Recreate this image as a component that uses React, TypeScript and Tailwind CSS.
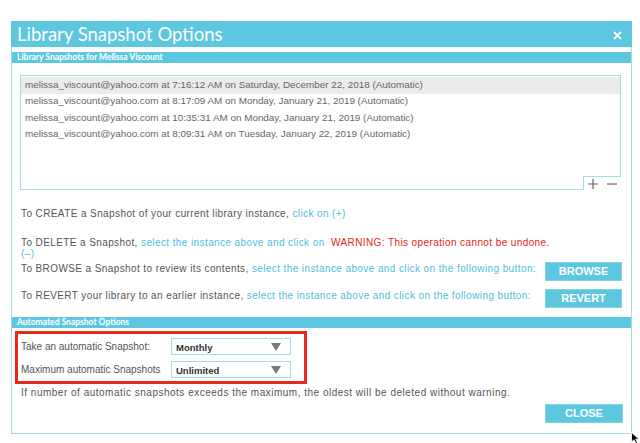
import React from "react";

const rows = [
  "melissa_viscount@yahoo.com at 7:16:12 AM on Saturday, December 22, 2018 (Automatic)",
  "melissa_viscount@yahoo.com at 8:17:09 AM on Monday, January 21, 2019 (Automatic)",
  "melissa_viscount@yahoo.com at 10:35:31 AM on Monday, January 21, 2019 (Automatic)",
  "melissa_viscount@yahoo.com at 8:09:31 AM on Tuesday, January 22, 2019 (Automatic)",
];

function Caret() {
  return (
    <svg width="10" height="8" viewBox="0 0 10 8" className="shrink-0">
      <path d="M0 0 H10 L5 8 Z" fill="#7a7a7a" />
    </svg>
  );
}

function Select({ value }: { value: string }) {
  return (
    <div className="w-[120px] h-[17px] border border-[#a6dbe8] bg-white flex items-center justify-between pl-[4px] pr-[9px]">
      <span className="text-[9.5px] font-bold text-[#333] leading-none pt-[2px]">{value}</span>
      <Caret />
    </div>
  );
}

export default function App() {
  return (
    <div className="w-[640px] h-[443px] bg-white relative pt-[21px] pl-[11px] font-['Liberation_Sans',Arial,sans-serif] text-[#555]">
      <div className="w-[621px] flex flex-col">
        {/* Title bar */}
        <div className="h-[26px] bg-[#5ec7e0] flex items-center justify-between pl-[6px] pr-[10px]">
          <span className="text-white text-[18.5px] font-['Lato',sans-serif] leading-none">Library Snapshot Options</span>
          <svg width="9" height="9" viewBox="0 0 9 9" className="mt-[3px]">
            <path d="M1 1 L8 8 M8 1 L1 8" stroke="white" strokeWidth="1.8" />
          </svg>
        </div>
        {/* Body */}
        <div className="border-x border-b border-[#a6d9e7] pt-[5px] pb-[10px] flex flex-col">
          <div className="h-[11px] bg-[#5ec7e0] flex items-center pl-[5px]">
            <span className="text-white text-[8.5px] font-bold font-['Lato',sans-serif] leading-none">Library Snapshots for Melissa Viscount</span>
          </div>
          {/* List */}
          <div className="relative mt-[12px] ml-[8px] mr-[10px] h-[115px] border border-[#a6dbe8] pt-px">
            {rows.map((r, i) => (
              <div
                key={i}
                className={`h-[16.5px] flex items-center pl-[4px] text-[9.9px] text-[#666] ${i === 0 ? "bg-[#ebebeb]" : ""}`}
              >
                {r}
              </div>
            ))}
            <div className="absolute right-[-1px] bottom-[-1px] w-[38px] h-[14px] bg-white border-l border-t border-[#a6dbe8] flex items-center justify-between px-[4px]">
              <svg width="10" height="10" viewBox="0 0 10 10">
                <path d="M5 0 V10 M0 5 H10" stroke="#666" strokeWidth="1.2" />
              </svg>
              <svg width="10" height="10" viewBox="0 0 10 10">
                <path d="M0 5 H10" stroke="#666" strokeWidth="1.2" />
              </svg>
            </div>
          </div>
          {/* Instructions */}
          <div className="pl-[9px] pr-[9px] text-[10px] tracking-[0.4px]">
            <div className="mt-[17px] leading-[14px]">
              To CREATE a Snapshot of your current library instance, <span className="text-[#4fc0db]">click on (+)</span>
            </div>
            <div className="mt-[15.5px] leading-[11px]">
              To DELETE a Snapshot, <span className="text-[#4fc0db]">select the instance above and click on</span>{" "}
              <span className="text-[#e32619]">&nbsp;WARNING: This operation cannot be undone.</span>
              <br />
              <span className="text-[#4fc0db]">(–)</span>
            </div>
            <div className="mt-[3.5px] h-[19px] flex items-start justify-between">
              <span className="leading-[14px]">
                To BROWSE a Snapshot to review its contents, <span className="text-[#4fc0db]">select the instance above and click on the following button:</span>
              </span>
              <button className="w-[77px] h-[19px] bg-[#5ec7e0] border border-[#7fd3e6] text-white text-[11px] font-bold leading-none tracking-normal">BROWSE</button>
            </div>
            <div className="mt-[8px] h-[19px] flex items-start justify-between">
              <span className="leading-[14px]">
                To REVERT your library to an earlier instance, <span className="text-[#4fc0db]">select the instance above and click on the following button:</span>
              </span>
              <button className="w-[77px] h-[19px] bg-[#5ec7e0] border border-[#7fd3e6] text-white text-[11px] font-bold leading-none tracking-normal">REVERT</button>
            </div>
          </div>
          {/* Automated */}
          <div className="mt-[9px] h-[11px] bg-[#5ec7e0] flex items-center pl-[5px]">
            <span className="text-white text-[8.5px] font-bold font-['Lato',sans-serif] leading-none">Automated Snapshot Options</span>
          </div>
          <div className="mt-[3px] ml-[3px] w-[292px] h-[53px] border-[3px] border-[#e5291d] pt-[4px] pl-[3px] flex flex-col gap-[6px] text-[10px]">
            <div className="flex items-center">
              <span className="w-[150px] leading-none">Take an automatic Snapshot:</span>
              <Select value="Monthly" />
            </div>
            <div className="flex items-center">
              <span className="w-[150px] leading-none">Maximum automatic Snapshots</span>
              <Select value="Unlimited" />
            </div>
          </div>
          <div className="mt-[2px] pl-[9px] text-[10px] leading-[14px] tracking-[0.5px]">
            If number of automatic snapshots exceeds the maximum, the oldest will be deleted without warning.
          </div>
          <div className="mt-[4px] flex justify-end pr-[8px]">
            <button className="w-[78px] h-[19px] bg-[#5ec7e0] border border-[#7fd3e6] text-white text-[11px] font-bold leading-none">CLOSE</button>
          </div>
        </div>
      </div>
      {/* cursor */}
      <svg className="absolute left-[631px] top-[432px]" width="9" height="12" viewBox="0 0 9 12">
        <path d="M0.5 0.5 V10 L3 7.8 L5 11.5 L6.5 10.8 L4.6 7.2 H8 Z" fill="black" stroke="white" strokeWidth="0.8" />
      </svg>
    </div>
  );
}
